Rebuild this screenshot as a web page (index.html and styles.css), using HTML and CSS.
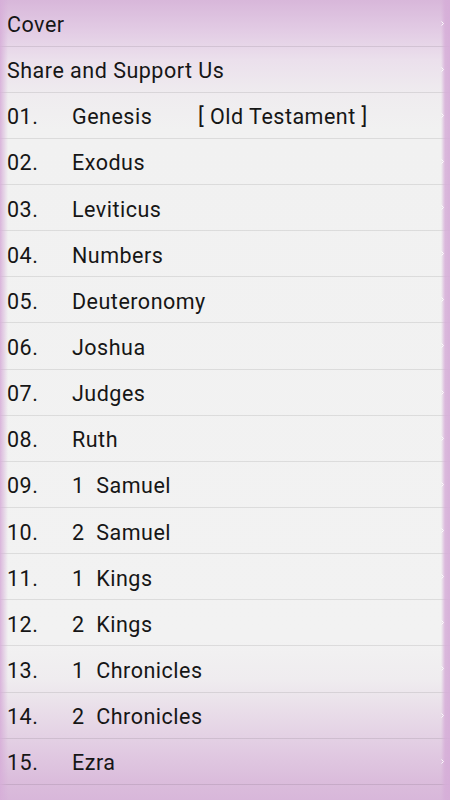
FILE: index.html
```html
<!DOCTYPE html>
<html>
<head>
<meta charset="utf-8">
<link rel="stylesheet" href="styles.css">
</head>
<body>
<div class="list">
  <div class="row"><span class="title">Cover</span><svg class="chev" viewBox="0 0 3 5" width="3" height="5"><path d="M0.5 0.5 L2.5 2.5 L0.5 4.5" fill="none" stroke="#fff" stroke-width="1"/></svg></div>
  <div class="row"><span class="title">Share and Support Us</span><svg class="chev" viewBox="0 0 3 5" width="3" height="5"><path d="M0.5 0.5 L2.5 2.5 L0.5 4.5" fill="none" stroke="#fff" stroke-width="1"/></svg></div>
  <div class="row"><span class="num">01.</span><span class="book wide">Genesis</span><span class="book">[ Old Testament ]</span><svg class="chev" viewBox="0 0 3 5" width="3" height="5"><path d="M0.5 0.5 L2.5 2.5 L0.5 4.5" fill="none" stroke="#fff" stroke-width="1"/></svg></div>
  <div class="row"><span class="num">02.</span><span class="book">Exodus</span><svg class="chev" viewBox="0 0 3 5" width="3" height="5"><path d="M0.5 0.5 L2.5 2.5 L0.5 4.5" fill="none" stroke="#fff" stroke-width="1"/></svg></div>
  <div class="row"><span class="num">03.</span><span class="book">Leviticus</span><svg class="chev" viewBox="0 0 3 5" width="3" height="5"><path d="M0.5 0.5 L2.5 2.5 L0.5 4.5" fill="none" stroke="#fff" stroke-width="1"/></svg></div>
  <div class="row"><span class="num">04.</span><span class="book">Numbers</span><svg class="chev" viewBox="0 0 3 5" width="3" height="5"><path d="M0.5 0.5 L2.5 2.5 L0.5 4.5" fill="none" stroke="#fff" stroke-width="1"/></svg></div>
  <div class="row"><span class="num">05.</span><span class="book">Deuteronomy</span><svg class="chev" viewBox="0 0 3 5" width="3" height="5"><path d="M0.5 0.5 L2.5 2.5 L0.5 4.5" fill="none" stroke="#fff" stroke-width="1"/></svg></div>
  <div class="row"><span class="num">06.</span><span class="book">Joshua</span><svg class="chev" viewBox="0 0 3 5" width="3" height="5"><path d="M0.5 0.5 L2.5 2.5 L0.5 4.5" fill="none" stroke="#fff" stroke-width="1"/></svg></div>
  <div class="row"><span class="num">07.</span><span class="book">Judges</span><svg class="chev" viewBox="0 0 3 5" width="3" height="5"><path d="M0.5 0.5 L2.5 2.5 L0.5 4.5" fill="none" stroke="#fff" stroke-width="1"/></svg></div>
  <div class="row"><span class="num">08.</span><span class="book">Ruth</span><svg class="chev" viewBox="0 0 3 5" width="3" height="5"><path d="M0.5 0.5 L2.5 2.5 L0.5 4.5" fill="none" stroke="#fff" stroke-width="1"/></svg></div>
  <div class="row"><span class="num">09.</span><span class="book">1  Samuel</span><svg class="chev" viewBox="0 0 3 5" width="3" height="5"><path d="M0.5 0.5 L2.5 2.5 L0.5 4.5" fill="none" stroke="#fff" stroke-width="1"/></svg></div>
  <div class="row"><span class="num">10.</span><span class="book">2  Samuel</span><svg class="chev" viewBox="0 0 3 5" width="3" height="5"><path d="M0.5 0.5 L2.5 2.5 L0.5 4.5" fill="none" stroke="#fff" stroke-width="1"/></svg></div>
  <div class="row"><span class="num">11.</span><span class="book">1  Kings</span><svg class="chev" viewBox="0 0 3 5" width="3" height="5"><path d="M0.5 0.5 L2.5 2.5 L0.5 4.5" fill="none" stroke="#fff" stroke-width="1"/></svg></div>
  <div class="row"><span class="num">12.</span><span class="book">2  Kings</span><svg class="chev" viewBox="0 0 3 5" width="3" height="5"><path d="M0.5 0.5 L2.5 2.5 L0.5 4.5" fill="none" stroke="#fff" stroke-width="1"/></svg></div>
  <div class="row"><span class="num">13.</span><span class="book">1  Chronicles</span><svg class="chev" viewBox="0 0 3 5" width="3" height="5"><path d="M0.5 0.5 L2.5 2.5 L0.5 4.5" fill="none" stroke="#fff" stroke-width="1"/></svg></div>
  <div class="row"><span class="num">14.</span><span class="book">2  Chronicles</span><svg class="chev" viewBox="0 0 3 5" width="3" height="5"><path d="M0.5 0.5 L2.5 2.5 L0.5 4.5" fill="none" stroke="#fff" stroke-width="1"/></svg></div>
  <div class="row"><span class="num">15.</span><span class="book">Ezra</span><svg class="chev" viewBox="0 0 3 5" width="3" height="5"><path d="M0.5 0.5 L2.5 2.5 L0.5 4.5" fill="none" stroke="#fff" stroke-width="1"/></svg></div>
</div>
</body>
</html>
```
FILE: styles.css
```css
html, body {
  margin: 0;
  padding: 0;
}
body {
  width: 450px;
  height: 800px;
  overflow: hidden;
  font-family: Roboto, "Liberation Sans", sans-serif;
  color: #161616;
  background: linear-gradient(to bottom,
    #d8b7da 0px,
    #e2cbe4 30px,
    #ebe0ec 60px,
    #efecef 95px,
    #f1f1f1 130px,
    #f2f2f2 640px,
    #efecef 680px,
    #e9dee9 710px,
    #e2cde3 745px,
    #dbbddc 780px,
    #d8b7da 800px);
}
body::after {
  content: "";
  position: fixed;
  inset: 0;
  pointer-events: none;
  z-index: 1;
  background: linear-gradient(to right,
    rgba(214, 174, 216, 0.9) 0px,
    rgba(214, 174, 216, 0.55) 3px,
    rgba(214, 174, 216, 0) 8px,
    rgba(214, 174, 216, 0) 441px,
    rgba(214, 174, 216, 0.85) 445px,
    rgba(214, 174, 216, 0.95) 450px);
}
.list {
  display: flex;
  flex-direction: column;
}
.row {
  box-sizing: border-box;
  height: 46.15px;
  flex: none;
  display: flex;
  align-items: center;
  padding: 3px 6px 0 7px;
  border-bottom: 1px solid rgba(0, 0, 0, 0.09);
  font-size: 21.5px;
  letter-spacing: 0.5px;
  white-space: pre;
}
.row:first-child {
  height: 46.55px;
  padding-top: 4px;
}
.num {
  width: 65px;
  flex: none;
}
.book.wide {
  width: 126px;
  flex: none;
}
.chev {
  margin-left: auto;
  margin-top: -3px;
  position: relative;
  z-index: 2;
  opacity: 0.9;
}
```
